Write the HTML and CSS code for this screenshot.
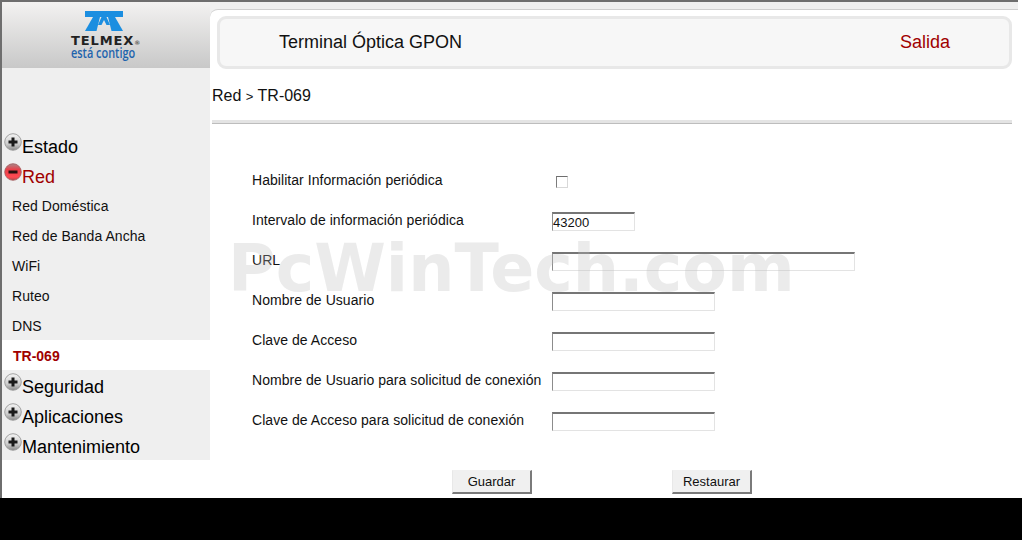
FILE: index.html
```html
<!DOCTYPE html>
<html lang="es">
<head>
    <meta charset="UTF-8">
    <meta name="viewport" content="width=device-width, initial-scale=1.0">
    <title>Terminal Óptica GPON</title>
    <link rel="stylesheet" href="styles.css">
</head>
<body>
    <svg class="defs" width="0" height="0">
        <defs>
            <linearGradient id="grayBall" x1="0" y1="0" x2="0" y2="1">
                <stop offset="0" stop-color="#f4f4f4"/>
                <stop offset="0.6" stop-color="#cfcfcf"/>
                <stop offset="1" stop-color="#8a8a8a"/>
            </linearGradient>
            <linearGradient id="redBall" x1="0" y1="0" x2="0" y2="1">
                <stop offset="0" stop-color="#a8888a"/>
                <stop offset="0.35" stop-color="#e8404a"/>
                <stop offset="0.8" stop-color="#ff4a52"/>
                <stop offset="1" stop-color="#b04a4c"/>
            </linearGradient>
            <symbol id="plus" viewBox="0 0 18 18">
                <circle cx="9" cy="9" r="8.300" fill="url(#grayBall)" stroke="#8f8f8f" stroke-width="0.800"/>
                <path d="M7.500 4.500h3v3h3v3h-3v3h-3v-3h-3v-3h3z" fill="#1a1a1a"/>
            </symbol>
            <symbol id="minus" viewBox="0 0 18 18">
                <circle cx="9" cy="9" r="8.300" fill="url(#redBall)" stroke="#a05a5c" stroke-width="0.800"/>
                <rect x="4.500" y="7.500" width="9" height="3" fill="#2a1010"/>
            </symbol>
        </defs>
    </svg>

    <div class="app">
        <div class="sidebar">
            <div class="logo">
                <svg class="logo-mark" width="38" height="20" viewBox="0 0 38 20">
                    <path d="M0 0h38v6H0z" fill="#1b8ee0"/>
                    <path d="M8 6h7l-3.500 14H0z" fill="#1b8ee0"/>
                    <path d="M30 6h-7l3.500 14H38z" fill="#1b8ee0"/>
                    <path d="M16.500 6h5l3.500 8h-3.500L19 9l-2.500 5H13z" fill="#1b8ee0"/>
                </svg>
                <div class="logo-name">TELMEX<span class="logo-reg">®</span></div>
                <div class="logo-tag">está contigo</div>
            </div>

            <ul class="menu">
                <li class="menu-item"><svg class="ball"><use href="#plus"/></svg>Estado</li>
                <li class="menu-item open"><svg class="ball"><use href="#minus"/></svg>Red</li>
                <li class="sub-item">Red Doméstica</li>
                <li class="sub-item">Red de Banda Ancha</li>
                <li class="sub-item">WiFi</li>
                <li class="sub-item">Ruteo</li>
                <li class="sub-item">DNS</li>
                <li class="sub-item active">TR-069</li>
                <li class="menu-item"><svg class="ball"><use href="#plus"/></svg>Seguridad</li>
                <li class="menu-item"><svg class="ball"><use href="#plus"/></svg>Aplicaciones</li>
                <li class="menu-item"><svg class="ball"><use href="#plus"/></svg>Mantenimiento</li>
            </ul>
        </div>

        <div class="content">
            <div class="panel">
                <div class="header">
                    <span class="title">Terminal Óptica GPON</span>
                    <span class="logout">Salida</span>
                </div>

                <div class="breadcrumb">Red <span class="crumb-sep">&gt;</span> TR-069</div>

                <form class="form">
                    <div class="form-row">
                        <label>Habilitar Información periódica</label>
                        <input type="checkbox" class="check">
                    </div>
                    <div class="form-row">
                        <label>Intervalo de información periódica</label>
                        <input type="text" class="field field-short" value="43200">
                    </div>
                    <div class="form-row">
                        <label>URL</label>
                        <input type="text" class="field field-long">
                    </div>
                    <div class="form-row">
                        <label>Nombre de Usuario</label>
                        <input type="text" class="field">
                    </div>
                    <div class="form-row">
                        <label>Clave de Acceso</label>
                        <input type="password" class="field">
                    </div>
                    <div class="form-row">
                        <label>Nombre de Usuario para solicitud de conexión</label>
                        <input type="text" class="field">
                    </div>
                    <div class="form-row">
                        <label>Clave de Acceso para solicitud de conexión</label>
                        <input type="password" class="field">
                    </div>
                    <div class="form-buttons">
                        <button type="button" class="button">Guardar</button>
                        <button type="button" class="button">Restaurar</button>
                    </div>
                </form>

                <div class="watermark">PcWinTech.com</div>
            </div>
        </div>
    </div>

    <div class="footer"></div>
</body>
</html>
```

FILE: styles.css
```css
body {
    font-family: "Liberation Sans", Arial, sans-serif;
    margin: 0;
    background-color: white;
    color: #111;
}

.defs {
    display: block;
}

.app {
    display: flex;
    width: 1016px;
    height: 496px;
    border-top: 2px solid #6e6e6e;
    border-left: 2px solid #6e6e6e;
}

.sidebar {
    width: 208px;
    flex-shrink: 0;
}

.logo {
    height: 66px;
    box-sizing: border-box;
    padding: 9px 0 0 69px;
    background: linear-gradient(#f3f2f1, #c8c8c8);
}

.logo-mark {
    display: block;
    margin-left: 14px;
}

.logo-name {
    margin-top: 4px;
    font-family: "DejaVu Sans", sans-serif;
    font-size: 13px;
    line-height: 11px;
    font-weight: bold;
    letter-spacing: 0.9px;
    color: #222;
}

.logo-reg {
    font-size: 6px;
    font-weight: normal;
    letter-spacing: 0;
}

.logo-tag {
    font-family: "Open Sans", sans-serif;
    font-size: 14px;
    line-height: 10px;
    font-weight: 600;
    white-space: nowrap;
    color: #1f64ad;
    transform: scaleX(0.78);
    transform-origin: left;
}

.menu {
    list-style: none;
    margin: 0;
    padding: 62px 0 0;
    background-color: #efefef;
}

.menu-item {
    height: 30px;
    box-sizing: border-box;
    display: flex;
    align-items: flex-start;
    padding: 3px 0 0 2px;
    font-size: 18px;
    line-height: 29px;
    color: #000;
}

.menu-item.open {
    color: #a00000;
}

.ball {
    width: 18px;
    height: 18px;
    flex-shrink: 0;
}

.sub-item {
    height: 30px;
    padding-left: 10px;
    font-size: 14px;
    letter-spacing: 0.06px;
    line-height: 32px;
}

.sub-item.active {
    background-color: white;
    padding-left: 11px;
    font-weight: bold;
    letter-spacing: 0;
    color: #a00000;
}

.content {
    flex: 1;
    background-color: #efefef;
    padding-top: 7px;
}

.panel {
    position: relative;
    height: 489px;
    box-sizing: border-box;
    padding: 6px 6px 0 7px;
    background-color: white;
    border-top: 1px solid #cfcfcf;
    border-top-left-radius: 8px;
}

.header {
    display: flex;
    justify-content: space-between;
    height: 53px;
    box-sizing: border-box;
    padding: 0 59px;
    background-color: #f7f7f7;
    border: 3px solid #e8e8e8;
    border-radius: 9px;
    font-size: 18px;
    line-height: 47px;
}

.logout {
    color: #a00000;
}

.breadcrumb {
    height: 51px;
    margin-left: -5px;
    padding-top: 17px;
    box-sizing: border-box;
    font-size: 16px;
    line-height: 19px;
}

.crumb-sep {
    font-size: 13px;
}

.form {
    margin-left: -5px;
    padding: 37px 0 0 40px;
    border-top: 3px solid #e4e4e4;
    box-shadow: inset 0 1px 0 #bdbdbd;
}

.form-row {
    display: flex;
    height: 40px;
}

.form-row label {
    width: 300px;
    flex-shrink: 0;
    font-size: 14px;
    letter-spacing: 0.05px;
    line-height: 40px;
}

.field {
    width: 163px;
    height: 19px;
    box-sizing: border-box;
    margin: 12px 0 0;
    padding: 2px 1px 1px 0;
    background-color: white;
    border-style: solid;
    border-width: 2px 1px 1px 1px;
    border-color: #767676 #e3e3e3 #e3e3e3 #8c8c8c;
    border-radius: 0;
    font-family: "Liberation Sans", Arial, sans-serif;
    font-size: 13px;
    color: #111;
}

.field-short {
    width: 83px;
}

.field-long {
    width: 303px;
}

.check {
    appearance: none;
    width: 12px;
    height: 12px;
    box-sizing: border-box;
    margin: 16px 0 0 4px;
    background-color: white;
    border-style: solid;
    border-width: 1px;
    border-color: #6e6e6e #d8d8d8 #d8d8d8 #7c7c7c;
}

.form-buttons {
    display: flex;
    gap: 140px;
    margin: 30px 0 0 200px;
}

.button {
    width: 80px;
    height: 24px;
    padding: 0;
    background-color: #f0f0f0;
    border-style: solid;
    border-width: 1px 2px 2px 1px;
    border-color: #f0f0f0 #7a7a7a #7a7a7a #e8e8e8;
    font-family: "Liberation Sans", Arial, sans-serif;
    font-size: 13px;
    color: #111;
}

/* sits over the form, like the stamp on the picture */
.watermark {
    position: absolute;
    left: 18px;
    top: 224px;
    font-family: "DejaVu Sans", sans-serif;
    font-size: 65px;
    line-height: 70px;
    font-weight: bold;
    white-space: nowrap;
    color: rgba(190, 190, 190, 0.3);
    pointer-events: none;
}

.footer {
    height: 42px;
    background-color: black;
}
```
